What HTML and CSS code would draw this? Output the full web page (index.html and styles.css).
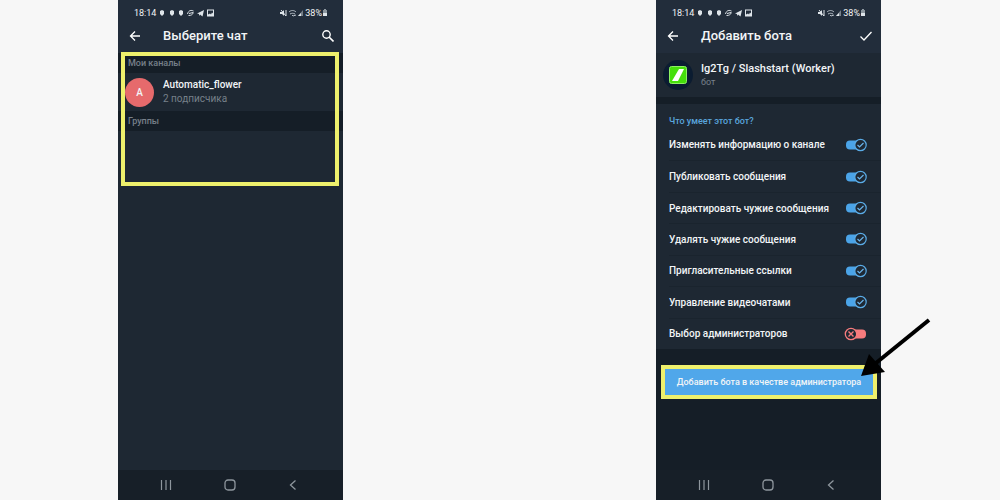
FILE: index.html
```
<!DOCTYPE html>
<html lang="ru">
  <head>
    <meta charset="UTF-8" />
    <meta name="viewport" content="width=device-width, initial-scale=1" />
    <title>Добавить бота</title>
    <link rel="stylesheet" href="styles.css">
  </head>
  <body>
    <svg class="sprite" aria-hidden="true">
      <symbol id="notifications" viewBox="0 0 56 10">
        <g fill="#dfe5ea">
          <path d="M3 2l2 1v3L4 7 3 8 2 7 1 6V3z" />
          <path d="M13 2l2 1v3l-1 1-1 1-1-1-1-1V3z" />
          <path d="M22 2l2 1v3l-1 1-1 1-1-1-1-1V3z" />
          <path d="M38 5.500l7-3.500-1.500 6.500-2.500-2-1 1.500V6z" />
          <path fill-rule="evenodd" d="M48 1.500h7v7h-7zM49 2.500v4l2-1 1 1 1-2 1 1v-3z" />
        </g>
        <path d="M28.500 6c1-4 4-4 6-3M29.500 7.500c3 0 4-1 5-3M30 5.500l4-1" fill="none" stroke="#dfe5ea" />
      </symbol>
      <symbol id="signal" viewBox="0 0 24 10">
        <path d="M0 4h2l2-2v6L2 6H0z" fill="#dfe5ea" />
        <path d="M1 2l5 6M6 2v6" fill="none" stroke="#dfe5ea" />
        <path d="M9 4c2-2 5-2 7 0M10 6c2-1 3-1 5 0M12 7l1 1 3-1" fill="none" stroke="#b8c0c8" />
        <path d="M18 8l5-6v6z" fill="#77818b" />
        <path d="M18 8l3-3v3z" fill="#dfe5ea" />
      </symbol>
      <symbol id="battery" viewBox="0 0 6 8">
        <path d="M2 0h2v1h1v6H1V1h1z" fill="#8d979f" />
        <path d="M1 4h4v3H1z" fill="#dfe5ea" />
      </symbol>
      <symbol id="back" viewBox="0 0 12 12">
        <path d="M11 6H2M6 1.500L1.500 6 6 10.500" fill="none" stroke="#fff" stroke-width="1.300" />
      </symbol>
      <symbol id="recents" viewBox="0 0 12 12">
        <path d="M1.500 1v10M6 1v10M10.500 1v10" stroke="#8e969d" stroke-width="1.200" />
      </symbol>
      <symbol id="home" viewBox="0 0 12 12">
        <rect x="1" y="1" width="10" height="10" rx="3" fill="none" stroke="#8e969d" stroke-width="1.300" />
      </symbol>
      <symbol id="previous" viewBox="0 0 12 12">
        <path d="M8.500 1.500L3.500 6l5 4.500" fill="none" stroke="#8e969d" stroke-width="1.300" />
      </symbol>
    </svg>

    <main class="screens">
      <section class="phone">
        <div class="status-bar">
          <span>18:14</span>
          <svg class="notifications"><use href="#notifications" /></svg>
          <svg class="signal"><use href="#signal" /></svg>
          <span>38%</span>
          <svg class="battery"><use href="#battery" /></svg>
        </div>
        <header class="app-bar">
          <button class="icon-btn" aria-label="Назад"><svg><use href="#back" /></svg></button>
          <h1>Выберите чат</h1>
          <button class="icon-btn" aria-label="Поиск">
            <svg viewBox="0 0 12 12">
              <circle cx="4.500" cy="4.500" r="3.700" fill="none" stroke="#fff" stroke-width="1.400" />
              <path d="M7 7l4.500 4.500" stroke="#fff" stroke-width="1.600" />
            </svg>
          </button>
        </header>
        <div class="chats">
          <h2 class="list-title">Мои каналы</h2>
          <a class="chat" href="#">
            <span class="avatar">A</span>
            <span class="chat-text">
              <span class="name">Automatic_flower</span>
              <span class="members">2 подписчика</span>
            </span>
          </a>
          <h2 class="list-title">Группы</h2>
          <div class="highlight"></div>
        </div>
        <nav class="nav-bar">
          <button aria-label="Недавние"><svg><use href="#recents" /></svg></button>
          <button aria-label="Домой"><svg><use href="#home" /></svg></button>
          <button aria-label="Назад"><svg><use href="#previous" /></svg></button>
        </nav>
      </section>

      <section class="phone phone-dark">
        <div class="status-bar">
          <span>18:14</span>
          <svg class="notifications"><use href="#notifications" /></svg>
          <svg class="signal"><use href="#signal" /></svg>
          <span>38%</span>
          <svg class="battery"><use href="#battery" /></svg>
        </div>
        <header class="app-bar">
          <button class="icon-btn" aria-label="Назад"><svg><use href="#back" /></svg></button>
          <h1>Добавить бота</h1>
          <button class="icon-btn" aria-label="Готово">
            <svg viewBox="0 0 12 12">
              <path d="M.5 6.500L4 10l7.500-8" fill="none" stroke="#fff" stroke-width="1.300" />
            </svg>
          </button>
        </header>
        <div class="bot">
          <svg class="bot-logo" viewBox="0 0 30 30">
            <circle cx="15" cy="15" r="15" fill="#0b1c31" />
            <rect x="6.500" y="6.500" width="17" height="17" rx="2" fill="#45df0b" stroke="#8cf263" />
            <path d="M16 9h5l-6 12H9z" fill="#fff" />
          </svg>
          <div class="bot-text">
            <span class="bot-name">Ig2Tg / Slashstart (Worker)</span>
            <span class="bot-type">бот</span>
          </div>
        </div>
        <div class="rights">
          <h2>Что умеет этот бот?</h2>
          <div class="rights-list">
            <label class="right">Изменять информацию о канале <input type="checkbox" checked /></label>
            <label class="right">Публиковать сообщения <input type="checkbox" checked /></label>
            <label class="right">Редактировать чужие сообщения <input type="checkbox" checked /></label>
            <label class="right">Удалять чужие сообщения <input type="checkbox" checked /></label>
            <label class="right">Пригласительные ссылки <input type="checkbox" checked /></label>
            <label class="right">Управление видеочатами <input type="checkbox" checked /></label>
            <label class="right">Выбор администраторов <input type="checkbox" /></label>
          </div>
        </div>
        <div class="action">
          <button class="add-btn">Добавить бота в качестве администратора</button>
          <svg class="arrow" viewBox="0 0 72 60">
            <path d="M69 3L16 46" stroke="#000" stroke-width="4" />
            <path d="M1 59L9 37l16 18z" />
          </svg>
        </div>
        <nav class="nav-bar">
          <button aria-label="Недавние"><svg><use href="#recents" /></svg></button>
          <button aria-label="Домой"><svg><use href="#home" /></svg></button>
          <button aria-label="Назад"><svg><use href="#previous" /></svg></button>
        </nav>
      </section>
    </main>
  </body>
</html>
```
FILE: styles.css
```
* {
  box-sizing: border-box;
}

body {
  margin: 0;
  background-color: #f7f7f7;
  font-family: Roboto, "Noto Sans", sans-serif;
  font-weight: 500;
  color: #f2f5f7;
}

h1,
h2 {
  margin: 0;
  font-weight: 500;
}

button {
  border: none;
  padding: 0;
  background: none;
  color: inherit;
  font-family: inherit;
  font-weight: inherit;
  cursor: pointer;
}

.sprite {
  display: none;
}

.screens {
  display: flex;
  justify-content: space-between;
  min-height: 100vh;
  padding: 0 11.9% 0 11.8%;
}

.phone {
  display: flex;
  flex-direction: column;
  width: 225px;
  background-color: #1e2833;
}

.phone-dark {
  background-color: #151e27;
}

.status-bar {
  display: flex;
  align-items: center;
  height: 25px;
  padding: 0 15px 0 16px;
  background-color: #222d3b;
  font-size: 9px;
  font-weight: 400;
}

.notifications {
  width: 56px;
  height: 10px;
  margin-left: 3px;
}

.signal {
  width: 24px;
  height: 10px;
  margin-left: auto;
  margin-right: 1px;
}

.battery {
  width: 6px;
  height: 8px;
}

.app-bar {
  display: flex;
  align-items: center;
  height: 28px;
  padding: 0 9px 7px 11px;
  background-color: #222d3b;
}

.app-bar h1 {
  flex: 1;
  margin-left: 22px;
  font-size: 13px;
  line-height: 20px;
}

.icon-btn,
.icon-btn svg {
  display: block;
  width: 12px;
  height: 12px;
}

/* chat list */
.chats {
  position: relative;
  flex: 1;
}

.list-title {
  height: 20px;
  padding-left: 10px;
  background-color: #151e27;
  color: #77808a;
  font-size: 9px;
  line-height: 20px;
}

.chat {
  display: flex;
  align-items: center;
  gap: 9px;
  height: 38px;
  padding-left: 7px;
  color: inherit;
  text-decoration: none;
}

.avatar {
  width: 29px;
  height: 29px;
  border-radius: 50%;
  background-color: #e66a6c;
  font-size: 10px;
  line-height: 29px;
  text-align: center;
}

.chat-text,
.bot-text {
  display: flex;
  flex-direction: column;
}

.name {
  font-size: 10px;
  line-height: 14px;
}

.members {
  color: #77808a;
  font-size: 10px;
  font-weight: 400;
  line-height: 14px;
}

.highlight {
  position: absolute;
  top: -1px;
  left: 3px;
  right: 4px;
  height: 134px;
  border: 4px solid #eef06c;
  pointer-events: none;
}

/* bot */
.bot {
  display: flex;
  align-items: center;
  gap: 8px;
  height: 44px;
  padding-left: 7px;
  background-color: #1e2833;
}

.bot-logo {
  width: 30px;
  height: 30px;
}

.bot-name {
  font-size: 11px;
  line-height: 14px;
}

.bot-type {
  color: #77808a;
  font-size: 9px;
  font-weight: 400;
  line-height: 12px;
}

.rights {
  margin-top: 7px;
  padding-top: 10px;
  background-color: #1e2833;
}

.rights h2 {
  padding-left: 13px;
  color: #5aa5dd;
  font-size: 9px;
  line-height: 15px;
}

.rights-list {
  display: grid;
  grid-auto-rows: 1fr;
  height: 220px;
}

.right {
  display: flex;
  align-items: center;
  justify-content: space-between;
  margin-left: 13px;
  padding-right: 14px;
  font-size: 10px;
}

.right + .right {
  border-top: 1px solid #1a242e;
}

.right input {
  appearance: none;
  width: 23px;
  height: 14px;
  margin: 0;
  background: url("data:image/svg+xml,%3Csvg xmlns='http://www.w3.org/2000/svg' viewBox='0 0 23 14'%3E%3Crect x='5' y='2.500' width='17' height='9' rx='4' fill='%23f77b7d'/%3E%3Ccircle cx='7' cy='7' r='5.700' fill='%231e2833' stroke='%23f77b7d' stroke-width='1.300'/%3E%3Cpath d='M4.500 4.500l5 5m0-5l-5 5' stroke='%23f77b7d' stroke-width='1.400'/%3E%3C/svg%3E");
}

.right input:checked {
  background-image: url("data:image/svg+xml,%3Csvg xmlns='http://www.w3.org/2000/svg' viewBox='0 0 23 14'%3E%3Crect x='2' y='2.500' width='15' height='9' rx='4' fill='%234ba4e8'/%3E%3Ccircle cx='16.500' cy='7' r='5.700' fill='%231e2833' stroke='%235aabe6' stroke-width='1.200'/%3E%3Cpath d='M13.500 7l2 2 4-4' fill='none' stroke='%236bb5eb' stroke-width='1.200'/%3E%3C/svg%3E");
}

.action {
  position: relative;
  flex: 1;
  padding: 16px 4px 0 5px;
}

.add-btn {
  width: 100%;
  height: 34px;
  border: 4px solid #eef06c;
  background-color: #50a7ea;
  font-size: 9px;
}

.arrow {
  position: absolute;
  top: -32px;
  right: -51px;
  width: 72px;
  height: 60px;
}

.nav-bar {
  display: flex;
  align-items: center;
  justify-content: space-between;
  height: 30px;
  padding: 0 44px 0 42px;
  background-color: #171f28;
}

.nav-bar svg {
  display: block;
  width: 12px;
  height: 12px;
}
```
